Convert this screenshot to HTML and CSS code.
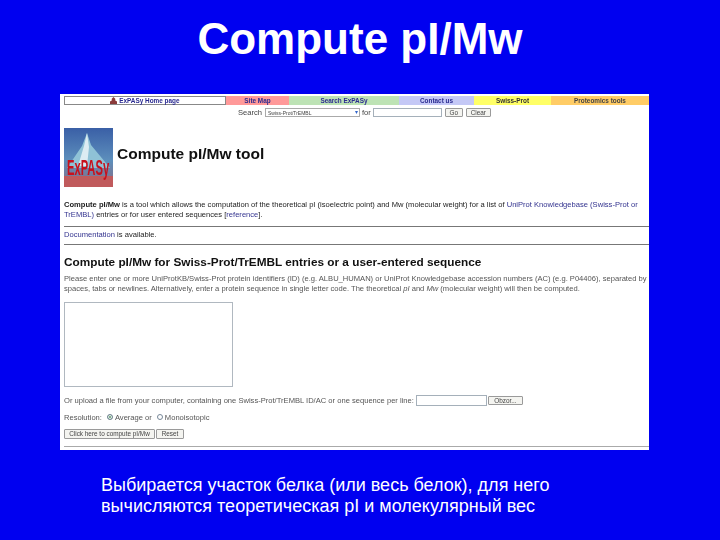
FILE: index.html
```html
<!DOCTYPE html>
<html lang="en">
<head>
<meta charset="utf-8">
<title>Compute pI/Mw</title>
<link rel="stylesheet" href="styles.css">
</head>
<body>
<main class="slide">
  <h1 class="slide-title">Compute pI/Mw</h1>
  <section class="shot">
    <nav class="nav">
      <a class="cell c-home"><svg class="home-icon" viewBox="0 0 8 8"><path d="M0 8V5l2-1V2l2-2 2 2v2l2 1v3z" fill="#8a3a3a"/></svg> ExPASy Home page</a>
      <a class="cell c-map">Site Map</a>
      <a class="cell c-search">Search ExPASy</a>
      <a class="cell c-contact">Contact us</a>
      <a class="cell c-swiss">Swiss-Prot</a>
      <a class="cell c-tools">Proteomics tools</a>
    </nav>
    <div class="search-row">
      <span>Search</span>
      <span class="select"><span>Swiss-Prot/TrEMBL</span><span class="arrow">▾</span></span>
      <span>for</span>
      <span class="input search-input"></span>
      <span class="btn go">Go</span>
      <span class="btn clear">Clear</span>
    </div>
    <div class="tool-head">
      <svg class="logo" viewBox="0 0 49 59">
        <defs>
          <linearGradient id="sky" x1="0" y1="0" x2="0" y2="1">
            <stop offset="0" stop-color="#3a5fa6"/>
            <stop offset="0.55" stop-color="#5d8fbc"/>
            <stop offset="1" stop-color="#8a6a80"/>
          </linearGradient>
        </defs>
        <rect width="49" height="59" fill="url(#sky)"/>
        <path d="M23 5 27 17 46 40H3L18 18z" fill="#8fc2d6"/>
        <path d="M23 5 25 19 23 38H14L20 18z" fill="#dcecf2"/>
        <rect y="48" width="49" height="11" fill="#c05a5c"/>
        <g transform="translate(3 47) scale(0.51 1)">
          <text class="logo-text">ExPASy</text>
        </g>
      </svg>
      <h2 class="tool-title">Compute pI/Mw tool</h2>
    </div>
    <p class="para intro"><b>Compute pI/Mw</b> is a tool which allows the computation of the theoretical pI (isoelectric point) and Mw (molecular weight) for a list of <a>UniProt Knowledgebase (Swiss-Prot or</a><br><a>TrEMBL)</a> entries or for user entered sequences [<a>reference</a>].</p>
    <hr class="rule first">
    <p class="para doc"><a>Documentation</a> is available.</p>
    <hr class="rule second">
    <h3 class="sub-title">Compute pI/Mw for Swiss-Prot/TrEMBL entries or a user-entered sequence</h3>
    <p class="para please">Please enter one or more UniProtKB/Swiss-Prot protein identifiers (ID) (e.g. ALBU_HUMAN) or UniProt Knowledgebase accession numbers (AC) (e.g. P04406), separated by<br>spaces, tabs or newlines. Alternatively, enter a protein sequence in single letter code. The theoretical <i>pI</i> and <i>Mw</i> (molecular weight) will then be computed.</p>
    <div class="textarea"></div>
    <div class="row upload">
      <span>Or upload a file from your computer, containing one Swiss-Prot/TrEMBL ID/AC or one sequence per line:</span>
      <span class="input file-input"></span>
      <span class="btn browse">Obzor...</span>
    </div>
    <div class="row resolution">
      <span>Resolution:</span>
      <span class="radio on"></span><span>Average or</span>
      <span class="radio"></span><span>Monoisotopic</span>
    </div>
    <div class="row actions">
      <span class="btn submit">Click here to compute pI/Mw</span>
      <span class="btn reset">Reset</span>
    </div>
    <hr class="rule last">
  </section>
  <p class="caption">Выбирается участок белка (или весь белок), для него<br>вычисляются теоретическая pI и молекулярный вес</p>
</main>
</body>
</html>
```
FILE: styles.css
```css
html, body {
  margin: 0;
  padding: 0;
  background: #0000f0;
}
.slide {
  width: 720px;
  height: 540px;
  overflow: hidden;
  display: flex;
  flex-direction: column;
  font-family: "Liberation Sans", Arial, sans-serif;
  background: #0000f0;
}
.slide-title {
  margin: 15px 0 0 0;
  height: 79px;
  line-height: 48px;
  font-size: 44px;
  font-weight: 700;
  color: #fff;
  text-align: center;
}
.shot {
  width: 589px;
  height: 356px;
  margin-left: 60px;
  background: #fff;
  box-sizing: border-box;
  padding: 2px 0 0 4px;
  color: #222;
  font-size: 7.58px;
  overflow: hidden;
  filter: blur(0.4px);
}
.nav {
  display: flex;
  height: 9px;
  font-size: 6.4px;
  font-weight: 700;
  line-height: 9px;
  text-align: center;
  color: #2a2a90;
}
.cell { display: block; box-sizing: border-box; }
.c-home { width: 162px; border: 1px solid #888; line-height: 7px; }
.c-map { width: 63px; background: #ff9999; }
.c-search { width: 110px; background: #bde3b5; }
.c-contact { width: 75px; background: #c4c8f6; }
.c-swiss { width: 77px; background: #ffff66; color: #333; }
.c-tools { width: 98px; background: #ffcc66; color: #444; }
.home-icon { width: 7px; height: 7px; vertical-align: -1px; }
.search-row {
  display: flex;
  align-items: center;
  height: 11px;
  margin-top: 2px;
  padding-left: 174px;
  color: #444;
}
.select {
  display: flex;
  justify-content: space-between;
  align-items: center;
  box-sizing: border-box;
  width: 95px;
  height: 9px;
  margin: 0 2px 0 3px;
  padding: 0 1px 0 2px;
  border: 1px solid #aaa;
  font-size: 5px;
}
.arrow { color: #36c; font-size: 6px; line-height: 7px; }
.input {
  display: block;
  box-sizing: border-box;
  background: #fff;
  border: 1px solid #a5b0ba;
}
.search-input { width: 69px; height: 9px; margin-left: 2px; }
.btn {
  display: block;
  box-sizing: border-box;
  text-align: center;
  background: #f4f4f0;
  border: 1px solid #9a9a9a;
  border-radius: 1px;
  color: #444;
  font-size: 6.4px;
}
.go { width: 18px; height: 9px; line-height: 7px; margin-left: 3px; }
.clear { width: 25px; height: 9px; line-height: 7px; margin-left: 3px; }
.tool-head {
  display: flex;
  align-items: center;
  margin-top: 10px;
  height: 59px;
}
.logo { width: 49px; height: 59px; display: block; }
.logo-text {
  font-family: "Liberation Sans", Arial, sans-serif;
  font-size: 22px;
  font-weight: 700;
  fill: #c8101c;
}
.tool-title {
  margin: 0 0 8px 4px;
  font-size: 15.5px;
  font-weight: 700;
  color: #111;
  white-space: nowrap;
}
.para {
  margin: 0;
  padding-right: 0;
  line-height: 9.5px;
  white-space: nowrap;
}
.para a { color: #33338f; }
.intro { margin-top: 13px; }
.rule {
  margin: 0;
  border: 0;
  height: 1px;
  background: #777;
}
.first { margin-top: 7px; }
.doc { margin-top: 3px; }
.second { margin-top: 4px; }
.sub-title {
  margin: 11px 0 0 0;
  font-size: 11.8px;
  line-height: 12px;
  font-weight: 700;
  color: #111;
  white-space: nowrap;
}
.please { margin-top: 6px; line-height: 10px; color: #555; }
.textarea {
  box-sizing: border-box;
  width: 169px;
  height: 85px;
  margin-top: 8px;
  border: 1px solid #b0b8c0;
}
.row {
  display: flex;
  align-items: center;
  color: #555;
  white-space: nowrap;
}
.upload { margin-top: 8px; height: 11px; }
.file-input { width: 71px; height: 11px; margin-left: 2px; }
.browse { width: 35px; height: 9px; line-height: 7px; margin-left: 1px; }
.resolution { margin-top: 7px; height: 9px; gap: 2px; }
.radio {
  box-sizing: border-box;
  width: 6px;
  height: 6px;
  margin-left: 3px;
  border: 1px solid #789;
  border-radius: 50%;
}
.radio.on { background: #5a9a6a; box-shadow: inset 0 0 0 1px #fff; }
.actions { margin-top: 7px; height: 10px; gap: 1px; }
.submit { width: 91px; height: 10px; line-height: 8px; }
.reset { width: 28px; height: 10px; line-height: 8px; }
.last { margin-top: 7px; background: #aaa; }
.caption {
  margin: 25px 0 0 101px;
  font-size: 18px;
  line-height: 21px;
  color: #fff;
}
```
